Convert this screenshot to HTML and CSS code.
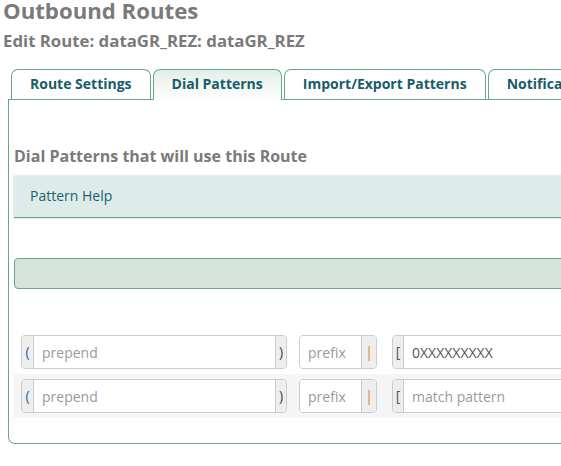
FILE: index.html
```html
<!DOCTYPE html>
<html>
<head>
<meta charset="utf-8">
<link rel="stylesheet" href="styles.css">
</head>
<body>
<div class="page">
  <h1 class="title">Outbound Routes</h1>
  <h2 class="subtitle">Edit Route: dataGR_REZ: dataGR_REZ</h2>
  <div class="tabs-wrap">
    <ul class="tabs">
      <li class="tab">Route Settings</li>
      <li class="tab active">Dial Patterns</li>
      <li class="tab">Import/Export Patterns</li>
      <li class="tab">Notifications</li>
      <li class="tab">Additional Settings</li>
    </ul>
    <div class="panel">
      <h3 class="section">Dial Patterns that will use this Route</h3>
      <div class="help">Pattern Help</div>
      <div class="bar"></div>
      <div class="rows">
        <div class="row">
          <div class="group g1"><span class="addon paren">(</span><input class="field" placeholder="prepend"><span class="addon paren2">)</span></div>
          <div class="group g2"><input class="field" placeholder="prefix"><span class="addon pipe">|</span></div>
          <div class="group g3"><span class="addon brk">[</span><input class="field" placeholder="match pattern" value="0XXXXXXXXX"><span class="addon">/</span></div>
        </div>
        <div class="row alt">
          <div class="group g1"><span class="addon paren">(</span><input class="field" placeholder="prepend"><span class="addon paren2">)</span></div>
          <div class="group g2"><input class="field" placeholder="prefix"><span class="addon pipe">|</span></div>
          <div class="group g3"><span class="addon brk">[</span><input class="field" placeholder="match pattern"><span class="addon">/</span></div>
        </div>
      </div>
    </div>
  </div>
</div>
</body>
</html>
```
FILE: styles.css
```css
html, body {
  margin: 0;
  padding: 0;
  overflow: hidden;
  background: #fff;
}
body {
  font-family: "Open Sans", "DejaVu Sans", sans-serif;
}
.page {
  width: 1100px;
  padding-left: 3px;
}
.title {
  margin: 0;
  font-size: 22.2px;
  line-height: 22px;
  font-weight: 700;
  color: #7a7a7a;
}
.subtitle {
  margin: 8px 0 0;
  font-size: 16.8px;
  line-height: 22px;
  font-weight: 700;
  color: #7a7a7a;
}
.tabs-wrap {
  margin-top: 17px;
  margin-left: 5px;
}
.tabs {
  list-style: none;
  margin: 0;
  padding: 0 0 0 3px;
  display: flex;
  gap: 2px;
  border-bottom: 1px solid #66a886;
}
.tab {
  height: 30px;
  box-sizing: border-box;
  padding: 4px 18px 0;
  border: 1px solid #66a886;
  border-bottom: none;
  border-radius: 7px 7px 0 0;
  font-size: 14px;
  line-height: 20px;
  font-weight: 700;
  color: #185c6a;
  white-space: nowrap;
  background: #fff;
}
.tab.active {
  height: 31px;
  margin-bottom: -1px;
  background: linear-gradient(#e2eee7, #ffffff);
}
.panel {
  border: 1px solid #66a886;
  border-top: none;
  border-radius: 0 0 7px 7px;
  padding: 45px 5px 25px;
}
.section {
  margin: 0;
  font-size: 16px;
  line-height: 22px;
  font-weight: 700;
  color: #7a7a7a;
}
.help {
  margin-top: 9px;
  padding: 10px 16px 11px;
  font-size: 14px;
  line-height: 20px;
  color: #1f5f6b;
  background: #ddeceb;
  border-bottom: 1px solid #66a886;
  box-shadow: 0 0 2px rgba(0, 0, 0, 0.25);
}
.bar {
  margin-top: 40px;
  height: 29px;
  background: #d6e3dc;
  border: 1px solid #66a886;
  border-radius: 4px;
}
.rows {
  margin-top: 41px;
}
.row {
  display: flex;
  padding: 5px 7px;
  height: 34px;
}
.row.alt {
  background: #f5f5f5;
}
.group {
  display: flex;
  height: 34px;
  box-sizing: border-box;
  border: 1px solid #cccccc;
  border-radius: 4px;
  overflow: hidden;
  background: #fff;
}
.g1 { width: 266px; }
.g2 { width: 78px; margin-left: 12px; }
.g3 { width: 500px; margin-left: 15px; }
.addon {
  flex: none;
  background: #eeeeee;
  font-size: 14px;
  line-height: 32px;
  text-align: center;
  color: #444;
}
.g1 .addon.paren { width: 11px; border-right: 1px solid #cccccc; color: #2f5f9e; }
.g1 .addon.paren2 { width: 10px; border-left: 1px solid #cccccc; color: #34495e; }
.addon.pipe { width: 14px; border-left: 1px solid #cccccc; color: #c8873a; }
.addon.brk { width: 10px; border-right: 1px solid #cccccc; color: #555; }
.g3 .addon:last-child { width: 14px; border-left: 1px solid #cccccc; }
.field {
  flex: 1;
  min-width: 0;
  border: none;
  outline: none;
  padding: 0 8px;
  font-family: "Open Sans", "DejaVu Sans", sans-serif;
  font-size: 14px;
  color: #555;
  background: #fff;
}
.field::placeholder {
  color: #9a9a9a;
}
```
